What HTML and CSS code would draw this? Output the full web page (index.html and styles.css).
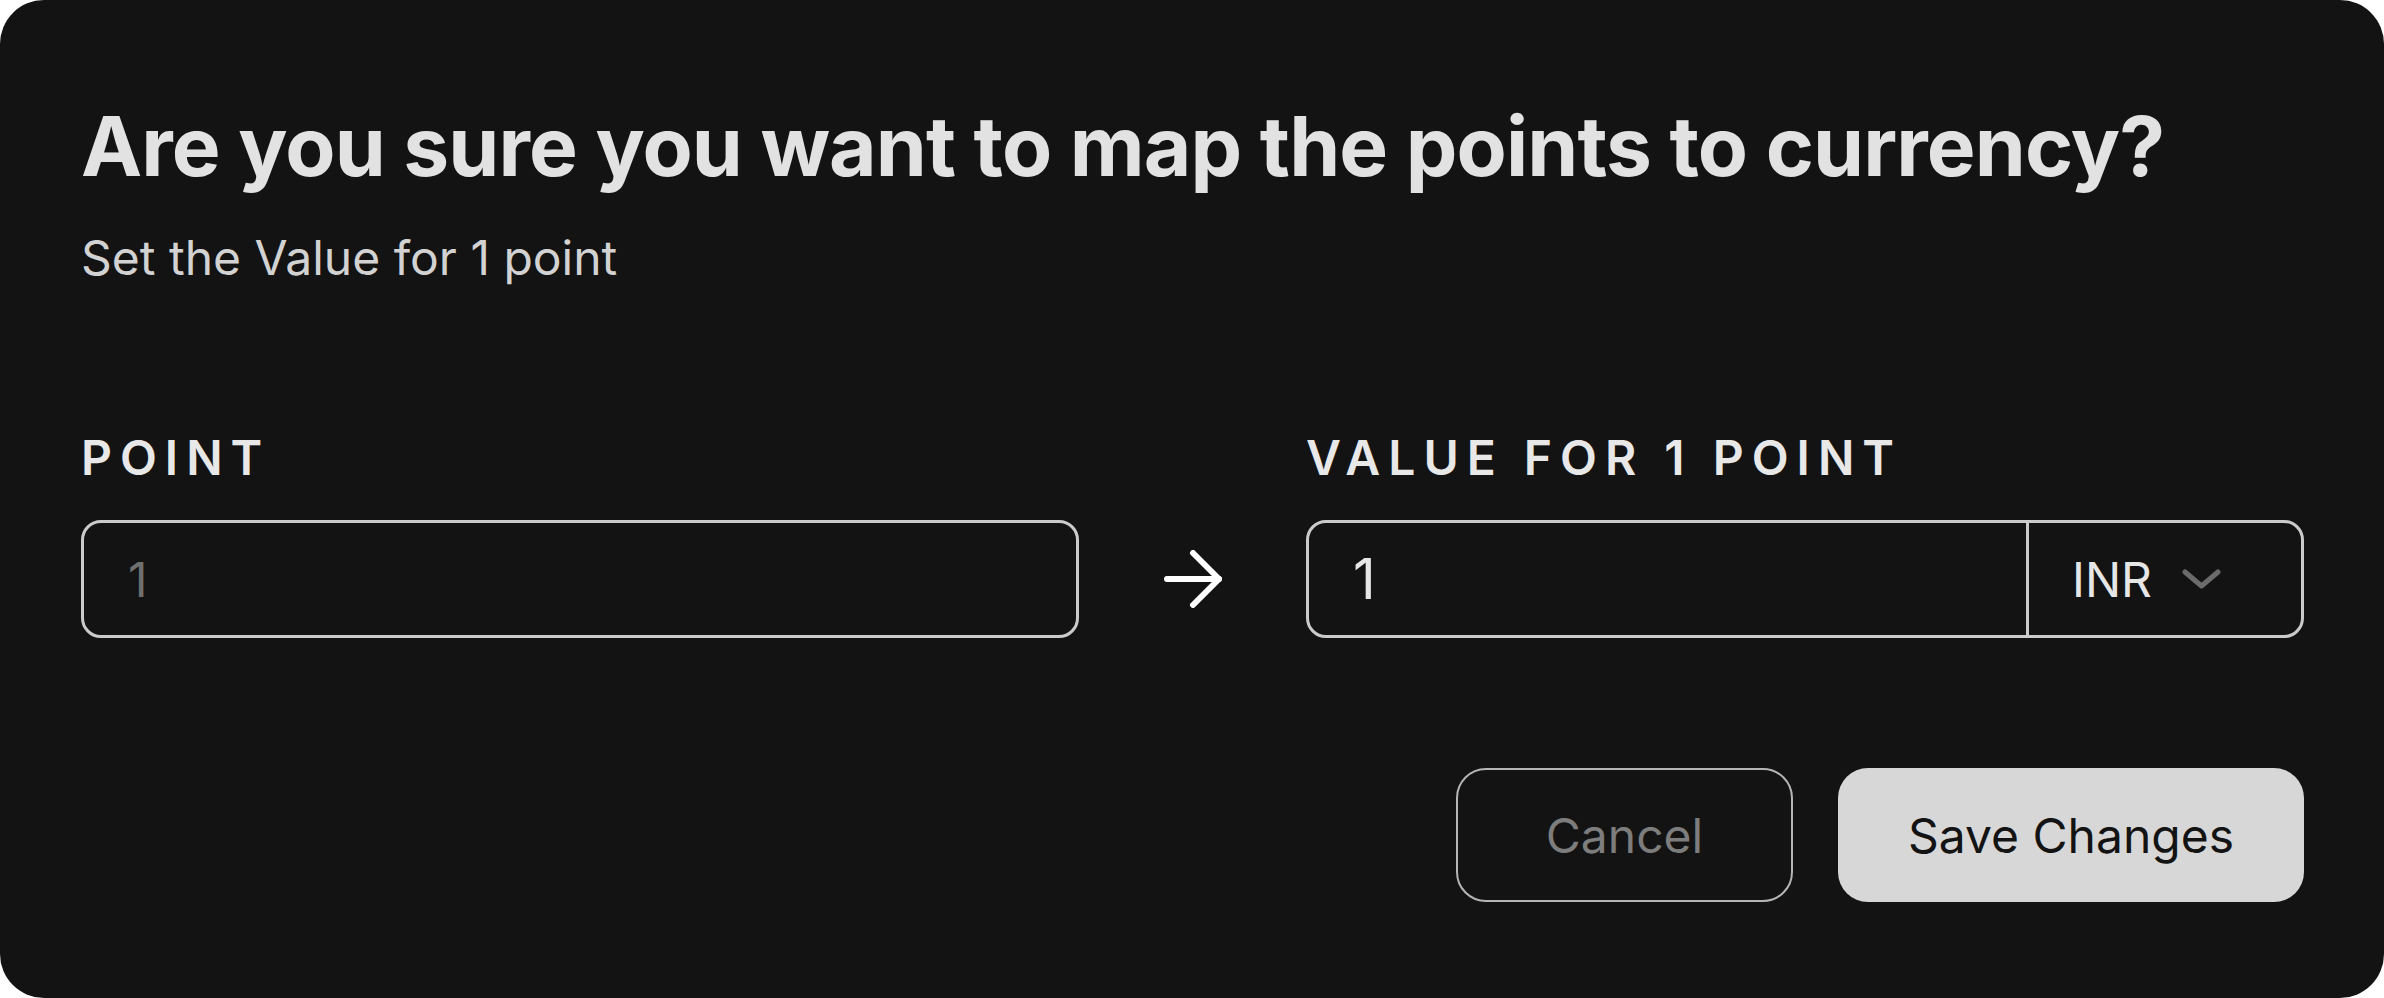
FILE: index.html
```html
<!DOCTYPE html>
<html lang="en">
  <head>
    <meta charset="UTF-8" />
    <meta name="viewport" content="width=device-width, initial-scale=1.0" />
    <title>Map points to currency</title>
    <link rel="stylesheet" href="styles.css">
  </head>
  <body>
    <section class="modal">
      <h1 class="modal-title">Are you sure you want to map the points to currency?</h1>
      <p class="modal-subtitle">Set the Value for 1 point</p>

      <div class="fields">
        <label class="field-label" for="point">Point</label>
        <label class="field-label field-label--right" for="value">Value for 1 point</label>

        <input class="field-input" id="point" type="text" placeholder="1">

        <div class="arrow">
          <svg width="58" height="58" viewBox="0 0 58 58" fill="none" stroke="#ffffff" stroke-width="6" stroke-linecap="round" stroke-linejoin="round">
            <path d="M3 29h52" />
            <path d="M29 3l26 26-26 26" />
          </svg>
        </div>

        <div class="combo">
          <input class="combo-input" id="value" type="text" value="1">
          <div class="currency">
            <span>INR</span>
            <svg width="39" height="20" viewBox="0 0 39 20" fill="none" stroke="#6b6b6b" stroke-width="5" stroke-linecap="round" stroke-linejoin="round">
              <path d="M3 3l16.5 14L36 3" />
            </svg>
          </div>
        </div>
      </div>

      <div class="actions">
        <button class="btn btn--ghost" type="button">Cancel</button>
        <button class="btn btn--primary" type="button">Save Changes</button>
      </div>
    </section>
  </body>
</html>
```

FILE: styles.css
```css
*,
*::after,
*::before {
  box-sizing: border-box;
}

body {
  margin: 0;
  background-color: #ffffff;
  font-family: "Inter", "Noto Sans", sans-serif;
}

.modal {
  height: 998px;
  width: 100%;
  background-color: #131313;
  border-radius: 44px;
  padding: 97px 80px 96px 81px;

  display: flex;
  flex-direction: column;
}

.modal-title {
  margin: 0;
  font-size: 82px;
  line-height: 100px;
  font-weight: 700;
  letter-spacing: -0.9px;
  color: #e2e2e2;
}

.modal-subtitle {
  margin: 32px 0 0;
  font-size: 48px;
  line-height: 58px;
  font-weight: 400;
  color: #d2d2d2;
}

/* grid: columna izquierda | flecha | columna derecha */
.fields {
  margin-top: 142px;
  display: grid;
  grid-template-columns: 1fr 227px 1fr;
  row-gap: 33px;
}

.field-label {
  grid-row: 1;
  grid-column: 1;
  font-size: 48px;
  line-height: 58px;
  font-weight: 600;
  letter-spacing: 8px;
  text-transform: uppercase;
  color: #e8e8e8;
}

.field-label--right {
  grid-column: 3;
}

.field-input {
  grid-row: 2;
  grid-column: 1;
  height: 118px;
  width: 100%;
  border: 3px solid #cbcbcb;
  border-radius: 20px;
  background: transparent;
  padding: 0 44px;
  font-family: inherit;
  font-size: 48px;
  color: #e6e6e6;
  outline: none;
}

.field-input::placeholder {
  color: #6f6f6f;
}

.arrow {
  grid-row: 2;
  grid-column: 2;
  display: flex;
  align-items: center;
  justify-content: center;
}

.combo {
  grid-row: 2;
  grid-column: 3;
  height: 118px;
  border: 3px solid #cbcbcb;
  border-radius: 20px;
  display: flex;
  overflow: hidden;
}

.combo-input {
  flex: 1;
  min-width: 0;
  border: none;
  background: transparent;
  padding: 0 44px;
  font-family: inherit;
  font-size: 56px;
  color: #e6e6e6;
  outline: none;
}

.currency {
  width: 275px;
  border-left: 3px solid #cbcbcb;
  padding-left: 43px;
  display: flex;
  align-items: center;
  gap: 30px;
  font-size: 48px;
  color: #e6e6e6;
}

.actions {
  margin-top: auto;
  display: flex;
  justify-content: flex-end;
  gap: 45px;
}

.btn {
  height: 134px;
  border-radius: 30px;
  font-family: inherit;
  font-size: 48px;
  font-weight: 400;
  cursor: pointer;
}

.btn--ghost {
  width: 337px;
  background: transparent;
  border: 2px solid #b5b5b5;
  color: #7d7d7d;
}

.btn--primary {
  width: 466px;
  background-color: #d8d7d8;
  border: none;
  color: #131313;
}
```
